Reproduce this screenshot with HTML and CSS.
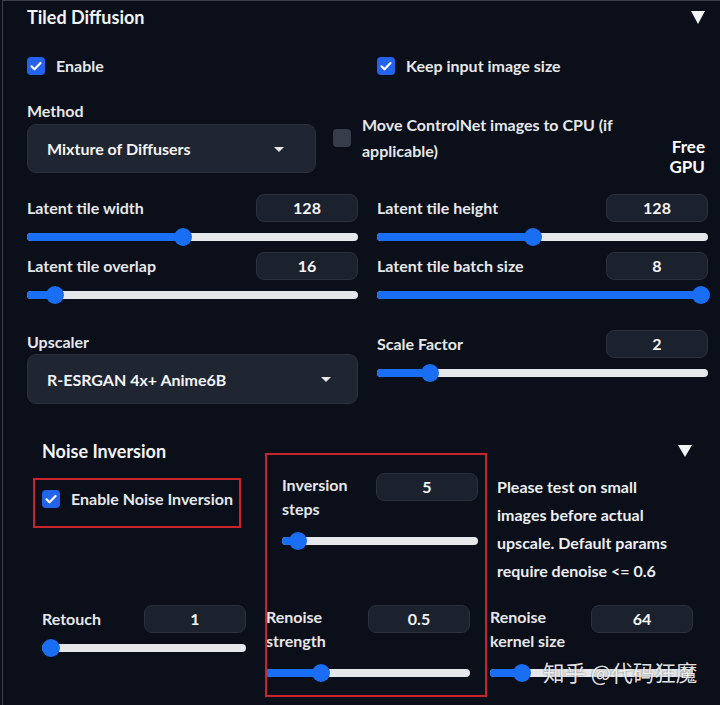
FILE: index.html
```html
<!DOCTYPE html>
<html lang="en">
<head>
  <meta charset="UTF-8">
  <title>Tiled Diffusion</title>
  <link rel="stylesheet" href="styles.css">
</head>
<body>
  <div class="panel">
    <div class="panel-head">
      <span class="panel-title">Tiled Diffusion</span>
      <span class="toggle"></span>
    </div>

    <div class="row two row-check">
      <label class="check"><span class="box on"><svg viewBox="0 0 18 18"><path d="M4.5 9.3l3 3 6-6.3" /></svg></span>Enable</label>
      <label class="check"><span class="box on"><svg viewBox="0 0 18 18"><path d="M4.5 9.3l3 3 6-6.3" /></svg></span>Keep input image size</label>
    </div>

    <div class="row row-method">
      <div class="method">
        <div class="label">Method</div>
        <div class="select select-method">Mixture of Diffusers<span class="caret"></span></div>
      </div>
      <label class="check check-cpu"><span class="box"></span><span class="cpu-text">Move ControlNet images to CPU (if applicable)</span></label>
      <div class="free-gpu">Free<br>GPU</div>
    </div>

    <div class="row two row-c">
      <div class="field">
        <div class="field-top"><span class="label">Latent tile width</span><span class="num">128</span></div>
        <div class="slider"><div class="fill" style="width:47%"></div><div class="thumb" style="left:47%"></div></div>
      </div>
      <div class="field">
        <div class="field-top"><span class="label">Latent tile height</span><span class="num">128</span></div>
        <div class="slider"><div class="fill" style="width:47%"></div><div class="thumb" style="left:47%"></div></div>
      </div>
    </div>

    <div class="row two row-d">
      <div class="field">
        <div class="field-top"><span class="label">Latent tile overlap</span><span class="num">16</span></div>
        <div class="slider"><div class="fill" style="width:8.5%"></div><div class="thumb" style="left:8.5%"></div></div>
      </div>
      <div class="field">
        <div class="field-top"><span class="label">Latent tile batch size</span><span class="num">8</span></div>
        <div class="slider"><div class="fill" style="width:98%"></div><div class="thumb" style="left:98%"></div></div>
      </div>
    </div>

    <div class="row two row-e">
      <div class="upscaler">
        <div class="label">Upscaler</div>
        <div class="select select-up">R-ESRGAN 4x+ Anime6B<span class="caret"></span></div>
      </div>
      <div class="field">
        <div class="field-top"><span class="label">Scale Factor</span><span class="num">2</span></div>
        <div class="slider"><div class="fill" style="width:16%"></div><div class="thumb" style="left:16%"></div></div>
      </div>
    </div>

    <div class="noise">
      <div class="noise-head">
        <span class="noise-title">Noise Inversion</span>
        <span class="toggle small"></span>
      </div>

      <div class="noise-row first">
        <label class="check check-noise"><span class="box on"><svg viewBox="0 0 18 18"><path d="M4.5 9.3l3 3 6-6.3" /></svg></span>Enable Noise Inversion</label>
        <div class="field tall">
          <div class="field-top"><span class="label wrap">Inversion steps</span><span class="num">5</span></div>
          <div class="slider"><div class="fill" style="width:8%"></div><div class="thumb" style="left:8%"></div></div>
        </div>
        <p class="note">Please test on small images before actual upscale. Default params require denoise &lt;= 0.6</p>
      </div>

      <div class="noise-row second">
        <div class="field">
          <div class="field-top"><span class="label wrap">Retouch</span><span class="num">1</span></div>
          <div class="slider"><div class="fill" style="width:4.5%"></div><div class="thumb" style="left:4.5%"></div></div>
        </div>
        <div class="field tall">
          <div class="field-top"><span class="label wrap">Renoise strength</span><span class="num">0.5</span></div>
          <div class="slider"><div class="fill" style="width:27%"></div><div class="thumb" style="left:27%"></div></div>
        </div>
        <div class="field tall">
          <div class="field-top"><span class="label wrap">Renoise kernel size</span><span class="num">64</span></div>
          <div class="slider"><div class="fill" style="width:16%"></div><div class="thumb" style="left:16%"></div></div>
        </div>
      </div>
    </div>

    <div class="mark mark-check"></div>
    <div class="mark mark-cols"></div>
    <div class="watermark">知乎 @代码狂魔</div>
  </div>
</body>
</html>
```

FILE: styles.css
```css
body {
  margin: 0;
  background: #0b0f19;
  font-family: Lato, "Noto Sans CJK SC", sans-serif;
  font-weight: 700;
  font-size: 16px;
  color: #e5e7eb;
}
.panel {
  position: relative;
  height: 704px;
  margin-left: 2px;
  border-top: 1px solid #3a404c;
  border-left: 1px solid #3a404c;
  padding: 0 12px 0 24px;
  overflow: hidden;
}
.panel-head {
  display: flex;
  justify-content: space-between;
  align-items: center;
  padding-top: 4px;
  height: 24px;
}
.panel-title {
  font-size: 18px;
  color: #f3f4f6;
  line-height: 24px;
}
.toggle {
  width: 0;
  height: 0;
  border-left: 7px solid transparent;
  border-right: 7px solid transparent;
  border-top: 13px solid #f3f4f6;
  margin-right: 3px;
}
.toggle.small {
  border-top-width: 12px;
  margin-right: 1px;
}
.row {
  display: flex;
}
.two {
  display: grid;
  grid-template-columns: 331px 331px;
  column-gap: 19px;
}
.row-check {
  margin-top: 28px;
}
.check {
  display: flex;
  align-items: center;
  line-height: 18px;
}
.box {
  flex: none;
  width: 18px;
  height: 18px;
  border-radius: 4px;
  background: #373d48;
  margin-right: 11px;
}
.box.on {
  background: #2463eb;
}
.box svg {
  display: block;
  width: 18px;
  height: 18px;
  fill: none;
  stroke: #fff;
  stroke-width: 2.2;
  stroke-linecap: round;
  stroke-linejoin: round;
}
.label {
  line-height: 20px;
  color: #e5e7eb;
}
.row-method {
  margin-top: 26px;
}
.method {
  width: 289px;
}
.select {
  position: relative;
  display: flex;
  align-items: center;
  margin-top: 3px;
  padding-left: 19px;
  background: #1f2531;
  border: 1px solid #2a303c;
  border-radius: 9px;
  color: #f3f4f6;
}
.select-method {
  height: 47px;
}
.caret {
  position: absolute;
  right: 31px;
  top: 50%;
  margin-top: -2px;
  border-left: 5px solid transparent;
  border-right: 5px solid transparent;
  border-top: 5px solid #e5e7eb;
}
.check-cpu {
  align-items: flex-start;
  margin-left: 17px;
  margin-top: 11px;
  flex: 1;
}
.check-cpu .box {
  margin-top: 17px;
}
.cpu-text {
  line-height: 26px;
  width: 270px;
}
.free-gpu {
  margin-top: 36px;
  margin-right: 3px;
  text-align: right;
  font-size: 17px;
  line-height: 20px;
  color: #fff;
}
.row-c {
  margin-top: 17px;
}
.row-d {
  margin-top: 11px;
}
.row-e {
  margin-top: 31px;
}
.field-top {
  display: flex;
  justify-content: space-between;
  align-items: center;
}
.num {
  flex: none;
  width: 100px;
  height: 26px;
  line-height: 26px;
  text-align: center;
  background: #1c222d;
  border: 1px solid #2a303c;
  border-radius: 8px;
  color: #f3f4f6;
}
.slider {
  position: relative;
  height: 8px;
  margin-top: 11px;
  background: #e5e7eb;
  border-radius: 4px;
}
.fill {
  height: 100%;
  background: #1a6ef3;
  border-radius: 4px;
}
.thumb {
  position: absolute;
  top: 50%;
  width: 18px;
  height: 18px;
  margin-top: -9px;
  margin-left: -9px;
  border-radius: 50%;
  background: #1a6ef3;
}
.upscaler .label {
  margin-top: 2px;
}
.select-up {
  height: 48px;
  margin-top: 2px;
}
.select-up .caret {
  right: 26px;
}
.noise {
  padding: 0 15px;
  margin-top: 35px;
}
.noise-head {
  display: flex;
  justify-content: space-between;
  align-items: center;
  height: 24px;
}
.noise-title {
  font-size: 18px;
  color: #f3f4f6;
}
.noise-row {
  display: grid;
}
.noise-row.first {
  grid-template-columns: 221px 196px 196px;
  column-gap: 19px;
  margin-top: 10px;
}
.noise-row.second {
  grid-template-columns: 204px 204px 203px;
  column-gap: 20px;
  margin-top: 20px;
}
.check-noise {
  align-self: start;
  margin-top: 17px;
}
.field-top .wrap {
  line-height: 24px;
  padding-right: 8px;
}
.tall .field-top {
  align-items: flex-start;
}
.tall .slider {
  margin-top: 16px;
}
.noise-row.second .field:first-child .field-top {
  align-items: center;
}
.note {
  margin: 0;
  padding-right: 14px;
  line-height: 28px;
  color: #eceef2;
}
.mark {
  position: absolute;
  border: 2px solid #c9232b;
}
.mark-check {
  left: 30px;
  top: 477px;
  width: 204px;
  height: 46px;
}
.mark-cols {
  left: 262px;
  top: 452px;
  width: 218px;
  height: 240px;
}
.watermark {
  position: absolute;
  left: 540px;
  top: 658px;
  font-family: "Noto Sans CJK SC", sans-serif;
  font-weight: 400;
  font-size: 21.5px;
  line-height: 26px;
  color: rgba(255, 255, 255, 0.9);
  text-shadow: 0 0 2px rgba(0, 0, 0, 0.6);
}
```
